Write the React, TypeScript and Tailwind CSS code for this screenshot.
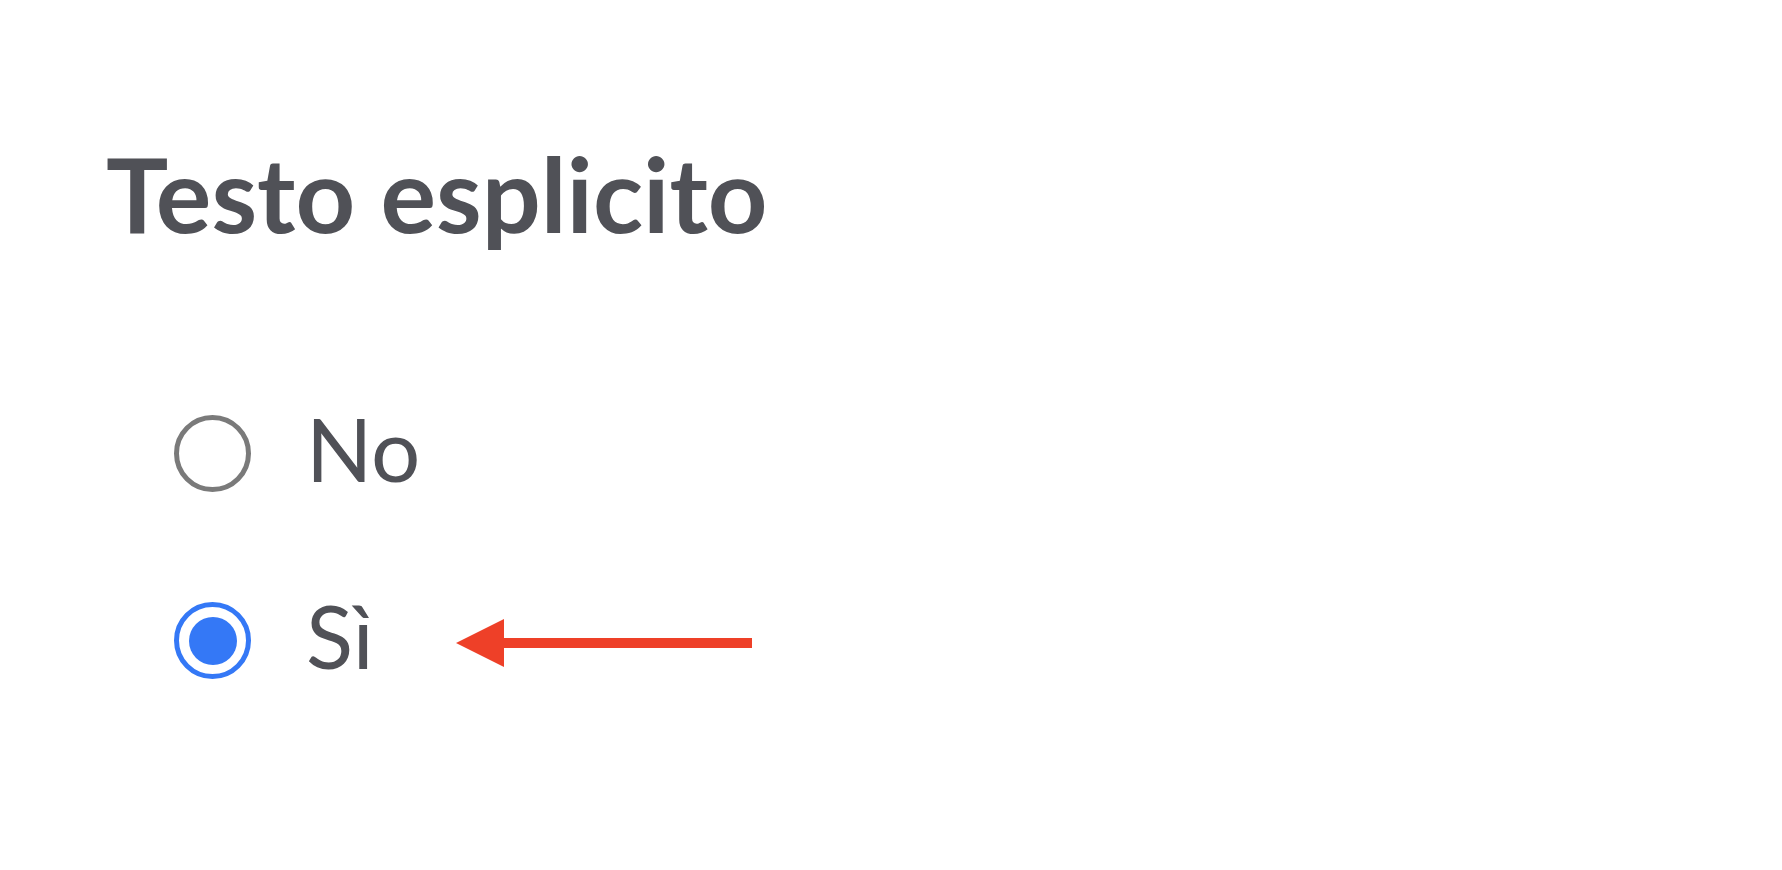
import React, { useState } from 'react';

const options = [
  { value: 'no', label: 'No' },
  { value: 'si', label: 'Sì' },
];

const RadioDot: React.FC<{ checked: boolean }> = ({ checked }) =>
  checked ? (
    <span className="flex w-[77px] h-[77px] rounded-full border-[5px] border-[#3478f6] items-center justify-center shrink-0">
      <span className="block w-[48px] h-[48px] rounded-full bg-[#3478f6]" />
    </span>
  ) : (
    <span className="block w-[77px] h-[77px] rounded-full border-[5px] border-[#7a7a7a] shrink-0" />
  );

// freccia rossa che indica l'opzione selezionata
const ArrowLeft = () => (
  <svg width="300" height="52" viewBox="0 0 300 52" className="ml-[82px] mt-[14px]">
    <polygon points="0,26 48,2 48,50" fill="#ee4028" />
    <rect x="46" y="21" width="250" height="10" fill="#ee4028" />
  </svg>
);

export default function App() {
  const [selected, setSelected] = useState('si');

  return (
    <div className="w-[1782px] h-[870px] bg-white pl-[106px] pt-[131px] text-[#505157] font-['Lato',sans-serif]">
      <h1 className="text-[104px] leading-[1.2] font-bold">Testo esplicito</h1>

      <div className="flex flex-col gap-[83px] mt-[141px] pl-[68px]">
        {options.map((opt) => (
          <label
            key={opt.value}
            className="flex items-center cursor-pointer"
            onClick={() => setSelected(opt.value)}
          >
            <span className="block mt-[9px]">
              <RadioDot checked={selected === opt.value} />
            </span>
            <span className="ml-[55px] text-[87px] leading-[1.2]">{opt.label}</span>
            {opt.value === 'si' && selected === 'si' && <ArrowLeft />}
          </label>
        ))}
      </div>
    </div>
  );
}
